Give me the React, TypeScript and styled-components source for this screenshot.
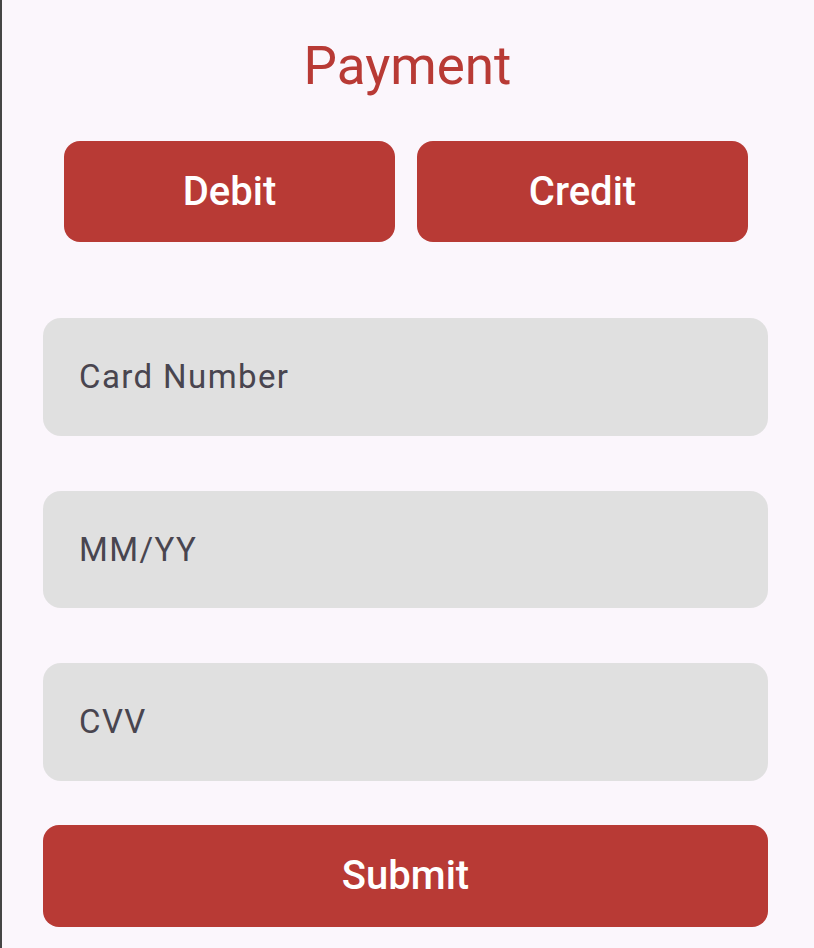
import * as React from 'react'
import styled, { createGlobalStyle } from 'styled-components'

const GlobalStyle = createGlobalStyle`
  html, body {
    margin: 0;
    padding: 0;
    background: #fbf6fc;
  }
  body {
    font-family: Roboto, "Noto Sans", sans-serif;
  }
`

const Screen = styled.div`
  box-sizing: border-box;
  width: 814px;
  height: 948px;
  border-left: 2px solid #454545;
  background: #fbf6fc;
  display: flex;
  flex-direction: column;
  padding: 0 46px 0 41px;
`

const Title = styled.h1`
  margin: 0;
  padding-top: 34px;
  height: 141px;
  box-sizing: border-box;
  text-align: center;
  font-size: 53px;
  font-weight: 400;
  line-height: 64px;
  color: #b83a35;
  padding-left: 4px;
`

const TypeRow = styled.div`
  display: grid;
  grid-template-columns: 1fr 1fr;
  gap: 22px;
  padding: 0 20px 0 21px;
  margin-bottom: 76px;
`

const RedButton = styled.button<{ $height: number }>`
  height: ${p => p.$height}px;
  border: none;
  border-radius: 16px;
  background: #b83a35;
  color: #ffffff;
  font-family: Roboto, sans-serif;
  font-weight: 500;
  font-size: 40px;
  padding: 0;
  cursor: pointer;
`

const Fields = styled.div`
  display: flex;
  flex-direction: column;
  gap: 55px;
  margin-bottom: 44px;
`

const Field = styled.div`
  height: 117.5px;
  border-radius: 18px;
  background: #e0e0e0;
  display: flex;
  align-items: center;
  padding-left: 36px;
  color: #49454f;
  font-size: 33px;
  letter-spacing: 1.4px;
`

const fields = ['Card Number', 'MM/YY', 'CVV']

const App: React.FunctionComponent = () => {
  return (
    <>
      <GlobalStyle />
      <Screen>
        <Title>Payment</Title>
        <TypeRow>
          <RedButton $height={101}>Debit</RedButton>
          <RedButton $height={101}>Credit</RedButton>
        </TypeRow>
        <Fields>
          {fields.map(label => (
            <Field key={label}>{label}</Field>
          ))}
        </Fields>
        <RedButton $height={102}>Submit</RedButton>
      </Screen>
    </>
  )
}

export default App
